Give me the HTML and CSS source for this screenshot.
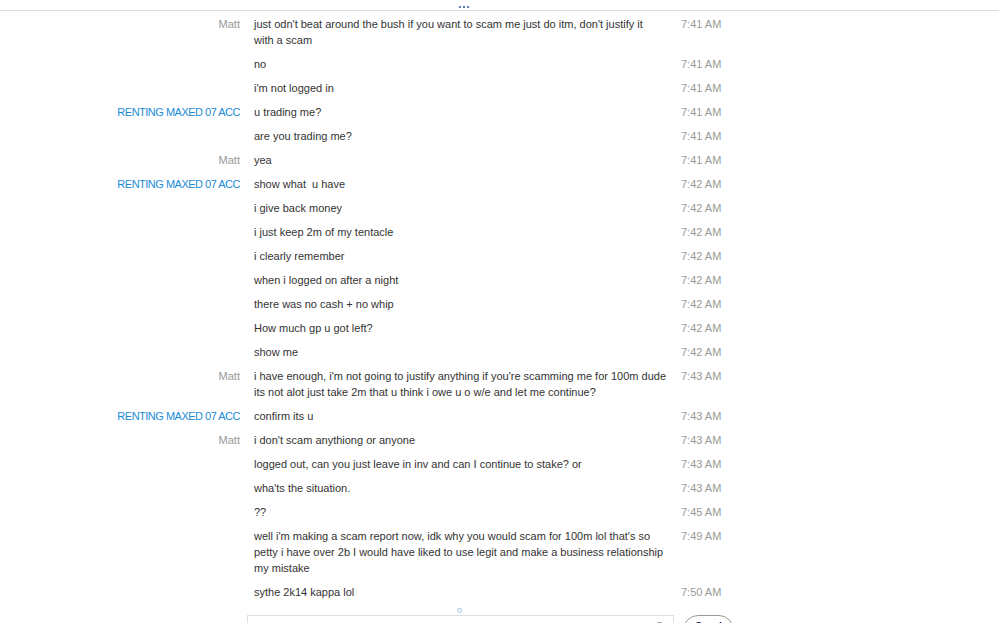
FILE: index.html
```html
<!DOCTYPE html>
<html>
<head>
<meta charset="utf-8">
<link rel="stylesheet" href="styles.css">
</head>
<body>
<div class="top"><div class="grip"><i></i><i></i><i></i></div></div>
<div class="log">
  <div class="row"><div class="name">Matt</div><div class="msg">just odn't beat around the bush if you want to scam me just do itm, don't justify it<br>with a scam</div><div class="time">7:41 AM</div></div>
  <div class="row"><div class="name"></div><div class="msg">no</div><div class="time">7:41 AM</div></div>
  <div class="row"><div class="name"></div><div class="msg">i'm not logged in</div><div class="time">7:41 AM</div></div>
  <div class="row"><div class="name blue">RENTING MAXED 07 ACC</div><div class="msg">u trading me?</div><div class="time">7:41 AM</div></div>
  <div class="row"><div class="name"></div><div class="msg">are you trading me?</div><div class="time">7:41 AM</div></div>
  <div class="row"><div class="name">Matt</div><div class="msg">yea</div><div class="time">7:41 AM</div></div>
  <div class="row"><div class="name blue">RENTING MAXED 07 ACC</div><div class="msg">show what&nbsp; u have</div><div class="time">7:42 AM</div></div>
  <div class="row"><div class="name"></div><div class="msg">i give back money</div><div class="time">7:42 AM</div></div>
  <div class="row"><div class="name"></div><div class="msg">i just keep 2m of my tentacle</div><div class="time">7:42 AM</div></div>
  <div class="row"><div class="name"></div><div class="msg">i clearly remember</div><div class="time">7:42 AM</div></div>
  <div class="row"><div class="name"></div><div class="msg">when i logged on after a night</div><div class="time">7:42 AM</div></div>
  <div class="row"><div class="name"></div><div class="msg">there was no cash + no whip</div><div class="time">7:42 AM</div></div>
  <div class="row"><div class="name"></div><div class="msg">How much gp u got left?</div><div class="time">7:42 AM</div></div>
  <div class="row"><div class="name"></div><div class="msg">show me</div><div class="time">7:42 AM</div></div>
  <div class="row"><div class="name">Matt</div><div class="msg">i have enough, i'm not going to justify anything if you're scamming me for 100m dude its not alot just take 2m that u think i owe u o w/e and let me continue?</div><div class="time">7:43 AM</div></div>
  <div class="row"><div class="name blue">RENTING MAXED 07 ACC</div><div class="msg">confirm its u</div><div class="time">7:43 AM</div></div>
  <div class="row"><div class="name">Matt</div><div class="msg">i don't scam anythiong or anyone</div><div class="time">7:43 AM</div></div>
  <div class="row"><div class="name"></div><div class="msg">logged out, can you just leave in inv and can I continue to stake? or</div><div class="time">7:43 AM</div></div>
  <div class="row"><div class="name"></div><div class="msg">wha'ts the situation.</div><div class="time">7:43 AM</div></div>
  <div class="row"><div class="name"></div><div class="msg">??</div><div class="time">7:45 AM</div></div>
  <div class="row"><div class="name"></div><div class="msg">well i'm making a scam report now, idk why you would scam for 100m lol that's so petty i have over 2b I would have liked to use legit and make a business relationship my mistake</div><div class="time">7:49 AM</div></div>
  <div class="row"><div class="name"></div><div class="msg">sythe 2k14 kappa lol</div><div class="time">7:50 AM</div></div>
</div>
<div class="ring"></div>
<div class="composer">
  <div class="input"><span class="emoji"></span></div>
  <div class="send">Send</div>
</div>
</body>
</html>
```
FILE: styles.css
```css
html, body {
  margin: 0;
  padding: 0;
  background: #fff;
  overflow: hidden;
}
body {
  font-family: "Liberation Sans", Arial, sans-serif;
  font-size: 11px;
  color: #333;
  height: 623px;
}
.top {
  height: 10px;
  border-bottom: 1px solid #dcdcdc;
}
.grip {
  display: flex;
  gap: 2px;
  padding-left: 459px;
  padding-top: 6px;
}
.grip i {
  display: block;
  width: 2px;
  height: 2px;
  background: #5a80b8;
}
.log {
  display: flex;
  flex-direction: column;
  padding-top: 1px;
}
.row {
  display: grid;
  grid-template-columns: 240px 413px 80px;
  column-gap: 14px;
  padding: 4px 0;
  line-height: 16px;
}
.name {
  text-align: right;
  color: #999;
}
.name.blue {
  color: #1a8ad6;
  letter-spacing: -0.5px;
}
.msg {
  color: #333;
}
.time {
  color: #999;
}
.ring {
  width: 3px;
  height: 3px;
  border: 1px solid #9cc3dd;
  border-radius: 50%;
  margin: 4px 0 0 457px;
}
.composer {
  display: flex;
  gap: 9px;
  margin: 2px 0 0 247px;
}
.input {
  width: 427px;
  height: 30px;
  border: 1px solid #dedede;
  border-bottom: none;
  box-sizing: border-box;
  display: flex;
  justify-content: flex-end;
  padding: 4px 8px 0 0;
}
.emoji {
  width: 9px;
  height: 9px;
  border: 1px solid #888;
  border-radius: 50%;
  margin-top: 2px;
}
.send {
  width: 51px;
  height: 30px;
  border: 1px solid #999;
  border-radius: 15px;
  box-sizing: border-box;
  text-align: center;
  padding-top: 3px;
  line-height: 14px;
  color: #1f2f4f;
  font-weight: bold;
}
```
